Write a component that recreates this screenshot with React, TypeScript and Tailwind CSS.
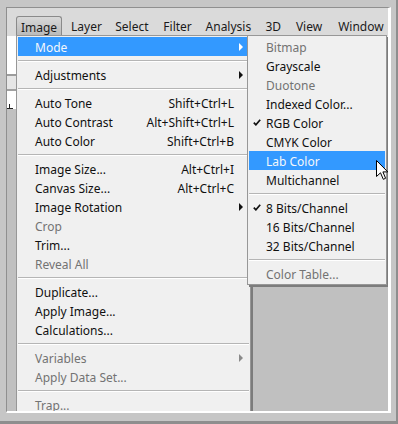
type Row =
  | { sep: true }
  | {
      sep?: false;
      label: string;
      shortcut?: string;
      arrow?: boolean;
      disabled?: boolean;
      active?: boolean;
      check?: boolean;
    };

const mainItems: Row[] = [
  { label: "Mode", arrow: true, active: true },
  { sep: true },
  { label: "Adjustments", arrow: true },
  { sep: true },
  { label: "Auto Tone", shortcut: "Shift+Ctrl+L" },
  { label: "Auto Contrast", shortcut: "Alt+Shift+Ctrl+L" },
  { label: "Auto Color", shortcut: "Shift+Ctrl+B" },
  { sep: true },
  { label: "Image Size...", shortcut: "Alt+Ctrl+I" },
  { label: "Canvas Size...", shortcut: "Alt+Ctrl+C" },
  { label: "Image Rotation", arrow: true },
  { label: "Crop", disabled: true },
  { label: "Trim..." },
  { label: "Reveal All", disabled: true },
  { sep: true },
  { label: "Duplicate..." },
  { label: "Apply Image..." },
  { label: "Calculations..." },
  { sep: true },
  { label: "Variables", arrow: true, disabled: true },
  { label: "Apply Data Set...", disabled: true },
  { sep: true },
  { label: "Trap...", disabled: true },
];

const modeItems: Row[] = [
  { label: "Bitmap", disabled: true },
  { label: "Grayscale" },
  { label: "Duotone", disabled: true },
  { label: "Indexed Color..." },
  { label: "RGB Color", check: true },
  { label: "CMYK Color" },
  { label: "Lab Color", active: true },
  { label: "Multichannel" },
  { sep: true },
  { label: "8 Bits/Channel", check: true },
  { label: "16 Bits/Channel" },
  { label: "32 Bits/Channel" },
  { sep: true },
  { label: "Color Table...", disabled: true },
];

function Separator() {
  return (
    <div className="h-[9px] flex flex-col justify-center">
      <div className="h-px bg-[#b5b5b5]" />
      <div className="h-px bg-white" />
    </div>
  );
}

function Arrow({ color }: { color: string }) {
  return (
    <svg width="4" height="8" viewBox="0 0 4 8">
      <polygon points="0,0 4,4 0,8" fill={color} />
    </svg>
  );
}

function Check() {
  return (
    <svg width="8" height="7" viewBox="0 0 8 7">
      <path d="M0.8 3.6 L2.9 5.8 L7.2 0.8" fill="none" stroke="#111" strokeWidth="1.7" />
    </svg>
  );
}

function MenuRow({ row, sub }: { row: Exclude<Row, { sep: true }>; sub?: boolean }) {
  const text = row.active ? "text-[#f4f7fb]" : row.disabled ? "text-[#737373]" : "text-[#101010]";
  const arrowColor = row.active ? "#ffffff" : row.disabled ? "#8a8a8a" : "#101010";
  return (
    <div className={`relative h-[19px] flex items-center pl-[17px] ${row.active ? "bg-[#3399ff]" : ""} ${text}`}>
      {row.check && (
        <span className="absolute left-[4px] top-[6px] flex">
          <Check />
        </span>
      )}
      <span className="flex-1 whitespace-nowrap pt-[2px]">{row.label}</span>
      {row.shortcut && <span className="whitespace-nowrap pt-[2px]">{row.shortcut}</span>}
      {!sub && (
        <span className="w-[15px] flex items-center pl-[5px]">{row.arrow && <Arrow color={arrowColor} />}</span>
      )}
    </div>
  );
}

export default function App() {
  const bar = [
    { label: "Layer", w: "w-[45px]" },
    { label: "Select", w: "w-[49px]" },
    { label: "Filter", w: "w-[43px]" },
    { label: "Analysis", w: "w-[61px]" },
    { label: "3D", w: "w-[31px]" },
    { label: "View", w: "w-[43px]" },
    { label: "Window", w: "w-[60px]" },
  ];

  return (
    <div
      className="w-[398px] h-[424px] bg-[#c6c6c6] pl-[6px] pt-[7px] pr-[5px] pb-[8px] border-b-[3px] border-r-[2px] border-[#8e8e8e] text-[12px] leading-none"
      style={{ fontFamily: '"Noto Sans", "Open Sans", sans-serif' }}
    >
      <div className="relative h-full border-l border-t border-[#8f8f8f] border-r-[3px] border-b-[2px] border-r-white border-b-white overflow-hidden flex flex-col">
        {/* menu bar */}
        <div className="h-[28px] shrink-0 bg-[#dadada] flex items-end text-[#1a1a1a]">
          <div className="ml-[9px] w-[47px] h-[20px] pt-[2px] flex items-center justify-center rounded-t-[3px] border border-b-0 border-[#8a8a8a] bg-gradient-to-b from-[#d8d8d8] to-[#b9b9b9]">
            Image
          </div>
          {bar.map((b) => (
            <div key={b.label} className={`${b.w} h-[20px] pt-[2px] flex items-center pl-[9px] whitespace-nowrap`}>
              {b.label}
            </div>
          ))}
        </div>

        {/* document area behind the menus */}
        <div className="flex-1 flex bg-[#c0c0c0]">
          <div className="w-[9px] flex flex-col">
            <div className="h-[38px] bg-white" />
            <div className="h-[2px] bg-[#9c9c9c]" />
            <div className="h-[13px] bg-[#e6e6e6]" />
            <div className="h-[2px] bg-[#a0a0a0]" />
            <div className="h-[18px] bg-white relative">
              <div className="absolute left-[0px] bottom-[0px] w-[6px] h-px bg-[#222]" />
              <div className="absolute left-[2px] bottom-[0px] w-px h-[5px] bg-[#222]" />
            </div>
          </div>
          <div className="flex-1" />
          <div className="w-[4px] h-[250px] bg-[#ececec] border-l border-[#777]" />
        </div>

        {/* Image menu */}
        <div className="absolute left-[9px] top-[27px] w-[235px] border border-[#979797] bg-[#f0f0f0] px-[1px] pt-[1px] pb-[4px] shadow-[2px_2px_0_#7c7c7c]">
          {mainItems.map((r, i) => (r.sep ? <Separator key={i} /> : <MenuRow key={i} row={r} />))}
        </div>

        {/* Mode submenu */}
        <div className="absolute left-[240px] top-[27px] w-[140px] border border-[#979797] bg-[#f0f0f0] px-[1px] py-[1px] shadow-[2px_2px_0_#7c7c7c]">
          {modeItems.map((r, i) => (r.sep ? <Separator key={i} /> : <MenuRow key={i} row={r} sub />))}
        </div>

        {/* cursor */}
        <svg className="absolute left-[369px] top-[152px]" width="13" height="21" viewBox="0 0 13 21">
          <path
            d="M0.5 0.5 L0.5 16.5 L4.5 12.8 L7.3 19.3 L9.6 18.3 L6.9 11.9 L11.8 11.9 Z"
            fill="#ffffff"
            stroke="#000"
            strokeWidth="1"
            strokeLinejoin="round"
          />
        </svg>
      </div>
    </div>
  );
}
